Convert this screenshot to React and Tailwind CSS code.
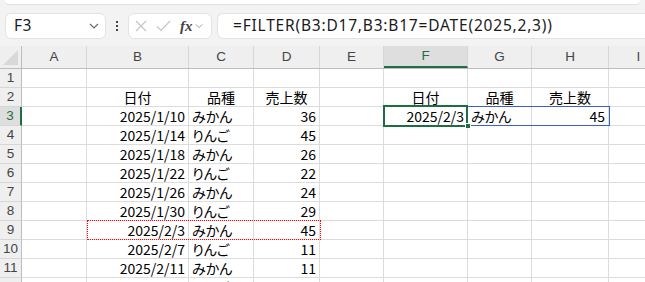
import React from "react";

const COLS = [
  { key: "A", w: "w-[65px]" },
  { key: "B", w: "w-[102px]" },
  { key: "C", w: "w-[65px]" },
  { key: "D", w: "w-[66px]" },
  { key: "E", w: "w-[64px]" },
  { key: "F", w: "w-[84px]" },
  { key: "G", w: "w-[64px]" },
  { key: "H", w: "w-[77px]" },
  { key: "I", w: "w-[60px]" },
];

const SALES = [
  ["2025/1/10", "みかん", "36"],
  ["2025/1/14", "りんご", "45"],
  ["2025/1/18", "みかん", "26"],
  ["2025/1/22", "りんご", "22"],
  ["2025/1/26", "みかん", "24"],
  ["2025/1/30", "りんご", "29"],
  ["2025/2/3", "みかん", "45"],
  ["2025/2/7", "りんご", "11"],
  ["2025/2/11", "みかん", "11"],
  ["2025/2/15", "りんご", "31"],
];

// cell content per row: { col: [text, align] }
const ROWS = Array.from({ length: 12 }, (_, i) => {
  const n = i + 1;
  const r = {};
  if (n === 2) {
    r.B = ["日付", "c"];
    r.C = ["品種", "c"];
    r.D = ["売上数", "c"];
    r.F = ["日付", "c"];
    r.G = ["品種", "c"];
    r.H = ["売上数", "c"];
  }
  if (n >= 3) {
    const [d, k, q] = SALES[n - 3];
    r.B = [d, "r"];
    r.C = [k, "l"];
    r.D = [q, "r"];
  }
  if (n === 3) {
    r.F = ["2025/2/3", "r"];
    r.G = ["みかん", "l"];
    r.H = ["45", "r"];
  }
  return { n, cells: r };
});

const align = { l: "justify-start pl-[3px]", r: "justify-end pr-[3px]", c: "justify-center" };

function Chevron({ className }) {
  return (
    <svg width="10" height="6" viewBox="0 0 10 6" className={className}>
      <path d="M1 1l4 4 4-4" fill="none" stroke="currentColor" strokeWidth="1.2" />
    </svg>
  );
}

function FormulaBar() {
  return (
    <div className="flex items-center h-[26px] mt-[9px] pl-[5px] font-['Noto_Sans',sans-serif]">
      <div className="w-[101px] h-full bg-white border border-[#e3e3e3] rounded-[6px] flex items-center pl-[8px] pr-[6px]">
        <span className="text-[15.5px] text-[#1a1a1a] flex-1 tracking-[0.5px]">F3</span>
        <Chevron className="text-[#6b6b6b]" />
      </div>
      <div className="w-[22px] flex flex-col items-center gap-[2px]">
        <span className="w-[2px] h-[2px] bg-[#444]" />
        <span className="w-[2px] h-[2px] bg-[#444]" />
        <span className="w-[2px] h-[2px] bg-[#444]" />
      </div>
      <div className="w-[84px] h-full bg-white border border-[#e3e3e3] rounded-[6px] flex items-center pl-[6px] gap-[9px]">
        <svg width="12" height="12" viewBox="0 0 12 12">
          <path d="M1 1l10 10M11 1L1 11" stroke="#c4c4c4" strokeWidth="1.1" />
        </svg>
        <svg width="15" height="12" viewBox="0 0 15 12">
          <path d="M1 6.5l4 4L14 1" fill="none" stroke="#c4c4c4" strokeWidth="1.1" />
        </svg>
        <div className="flex items-center gap-[2px]">
          <span className="font-['Liberation_Serif',serif] italic font-bold text-[15px] text-[#444] leading-none">fx</span>
          <Chevron className="text-[#9a9a9a] w-[8px]" />
        </div>
      </div>
      <div className="ml-[5px] flex-1 h-full bg-white border border-[#e3e3e3] border-r-0 rounded-l-[6px] flex items-center pl-[15px]">
        <span className="text-[15.5px] text-[#1a1a1a] tracking-[0.8px]">=FILTER(B3:D17,B3:B17=DATE(2025,2,3))</span>
      </div>
    </div>
  );
}

export default function App() {
  return (
    <div className="w-[645px] h-[282px] overflow-hidden bg-[#f3f3f3] relative">
      <div className="mx-[5px] h-[4px] bg-white rounded-b-[6px] shadow-[0_1px_1px_rgba(0,0,0,0.08)]" />
      <FormulaBar />

      <div className="relative mt-[7px]">
        {/* column headers */}
        <div className="flex h-[23px] border-b border-[#bdbdbd] bg-[#efefef] font-['Liberation_Sans',sans-serif] text-[13.5px] text-[#444]">
          <div className="w-[22px] shrink-0 border-r border-[#bdbdbd] relative">
            <svg width="15" height="15" viewBox="0 0 15 15" className="absolute right-[3px] bottom-[3px]">
              <path d="M15 0V15H0Z" fill="#d8d8d8" />
            </svg>
          </div>
          {COLS.map((c) => (
            <div
              key={c.key}
              className={`${c.w} shrink-0 flex items-center justify-center border-r border-[#d6d6d6] ${
                c.key === "F" ? "bg-[#dedede] text-[#1e6e42] border-b-2 border-b-[#1e6e42]" : ""
              }`}
            >
              {c.key}
            </div>
          ))}
        </div>

        {/* rows */}
        {ROWS.map((row) => (
          <div key={row.n} className="flex h-[19px]">
            <div
              className={`w-[22px] shrink-0 flex items-center justify-center border-b border-[#d6d6d6] font-['Liberation_Sans',sans-serif] text-[13.5px] ${
                row.n === 3
                  ? "bg-[#dedede] text-[#1e6e42] border-r-2 border-r-[#1e6e42]"
                  : "bg-[#efefef] text-[#444] border-r border-r-[#bdbdbd]"
              }`}
            >
              {row.n}
            </div>
            {COLS.map((c) => {
              const cell = row.cells[c.key];
              return (
                <div
                  key={c.key}
                  className={`${c.w} shrink-0 bg-white border-r border-b border-[#dcdcdc] flex items-center whitespace-nowrap overflow-visible font-['Noto_Sans_CJK_JP',sans-serif] text-[14px] text-black [font-feature-settings:'palt'] ${
                    cell ? align[cell[1]] : ""
                  }`}
                >
                  {cell ? cell[0] : null}
                </div>
              );
            })}
          </div>
        ))}

        {/* spill range F3:H3 */}
        <div className="absolute left-[383px] top-[60px] w-[227px] h-[20px] border border-[#3a63c0]" />
        {/* active cell F3 */}
        <div className="absolute left-[383px] top-[59px] w-[85px] h-[22px] border-2 border-[#1e6e42]" />
        <div className="absolute left-[465px] top-[77px] w-[6px] h-[6px] bg-[#1e6e42] border border-white" />
        {/* copy marquee B9:D9 */}
        <div className="absolute left-[87px] top-[174px] w-[234px] h-[20px] border border-dotted border-[#ff0000]" />
      </div>
    </div>
  );
}
